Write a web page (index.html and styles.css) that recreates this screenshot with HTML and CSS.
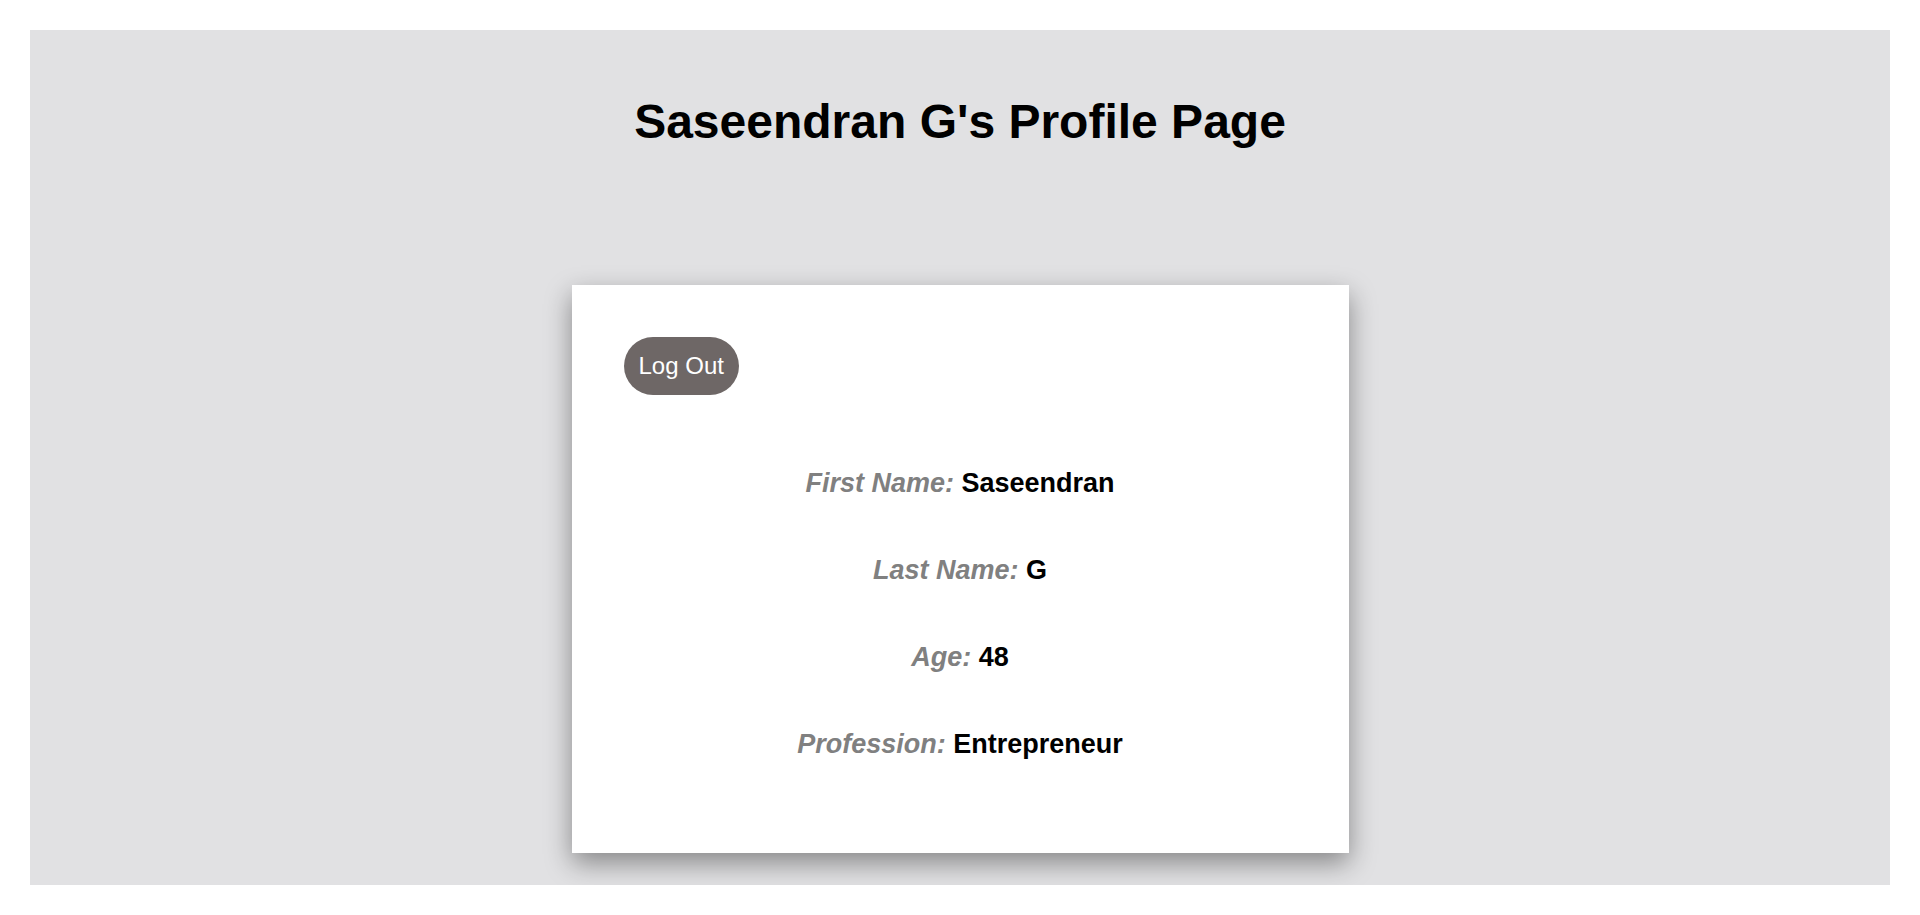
FILE: index.html
```html
<!DOCTYPE html>
<html>
<head>
  <link rel="stylesheet" href="styles.css">
</head>
<body>
  <div class="profile-page">
    <h1>Saseendran G's Profile Page</h1>

    <div class="profile-card">
      <button type="button" class="logout-btn">Log Out</button>

      <div class="details">
        <p><span class="label">First Name:</span> Saseendran</p>
        <p><span class="label">Last Name:</span> G</p>
        <p><span class="label">Age:</span> 48</p>
        <p><span class="label">Profession:</span> Entrepreneur</p>
      </div>
    </div>
  </div>
</body>
</html>
```

FILE: styles.css
```css
/* Profile page styles */
body {
  margin: 30px;
  font-family: "Liberation Sans", Arial, sans-serif;
}

.profile-page {
  background-color: #e1e1e3;
  padding: 32px 0;
}

.profile-page h1 {
  text-align: center;
  font-size: 48px;
  margin: 32px 0;
}

.profile-card {
  width: 777px;
  box-sizing: border-box;
  margin: 136px auto 0;
  padding: 52px;
  background-color: #fff;
  box-shadow: 0 10px 25px rgba(0, 0, 0, 0.4);
}

.logout-btn {
  font-family: "Liberation Sans", Arial, sans-serif;
  font-size: 24px;
  padding: 15px;
  background-color: #6e6766;
  color: white;
  border: none;
  border-radius: 30px;
  cursor: pointer;
}

.details {
  display: flex;
  flex-direction: column;
  gap: 56px;
  margin: 73px 0 41px;
  text-align: center;
}

.details p {
  margin: 0;
  font-size: 27px;
  font-weight: bold;
}

.details .label {
  color: gray;
  font-style: italic;
}
```
